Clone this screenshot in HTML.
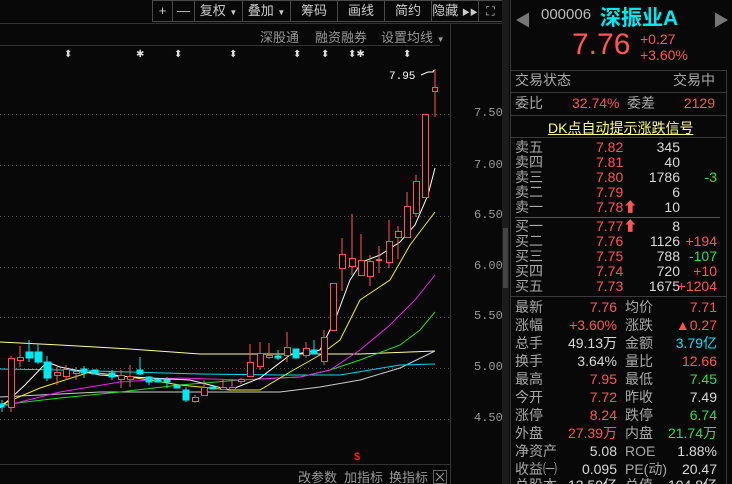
<!DOCTYPE html>
<html style="width:732px;height:484px;overflow:hidden"><head><meta charset="utf-8"><style>
*{margin:0;padding:0;box-sizing:border-box}
body{width:732px;height:484px;background:#080808;overflow:hidden;position:relative;font-family:"Liberation Sans","Noto Sans CJK SC",sans-serif;color:#c8c8c8}
.a{position:absolute;white-space:nowrap}
.tb{position:absolute;top:0;height:22px;border:1px solid #4a4a4a;border-left:none;font-size:13px;color:#ccc;text-align:center;line-height:20px}
.r{color:#ff5555}.g{color:#33dd55}.c{color:#00e8f0}.w{color:#d8d8d8}.l{color:#a8a8a8}
.row{position:absolute;left:515px;width:207px;height:15px;font-size:14px;line-height:15px}
.row span{position:absolute}
.hl{position:absolute;height:1px;background:#3a3a3a}
</style></head><body>
<div class="tb" style="left:152px;width:21px;border-left:1px solid #4a4a4a">+</div>
<div class="tb" style="left:173px;width:22px">—</div>
<div class="tb" style="left:195px;width:48px">复权 <span style="font-size:8px">▼</span></div>
<div class="tb" style="left:243px;width:48px">叠加 <span style="font-size:8px">▼</span></div>
<div class="tb" style="left:291px;width:47px">筹码</div>
<div class="tb" style="left:338px;width:47px">画线</div>
<div class="tb" style="left:385px;width:47px">简约</div>
<div class="tb" style="left:432px;width:47px">隐藏 <span style="font-size:8px">▶▶</span></div>
<div class="tb" style="left:479px;width:24px;font-size:12px">⛶</div>
<div class="a" style="left:0;top:23px;width:503px;height:1px;background:#333"></div>
<div class="a l" style="left:260px;top:27px;font-size:13px;color:#999">深股通</div>
<div class="a l" style="left:315px;top:27px;font-size:13px;color:#999">融资融券</div>
<div class="a l" style="left:381px;top:27px;font-size:13px;color:#999">设置均线 <span style="font-size:8px">▼</span></div>
<div class="a" style="left:0;top:45px;width:440px;height:1px;background:#333"></div>
<div class="a" style="left:450px;top:23px;width:1px;height:461px;background:#333"></div>
<div class="a" style="left:502px;top:0;width:7px;height:484px;background:#1c1c1c"></div>
<div class="a" style="left:503px;top:228px;width:5px;height:60px;background:#444"></div>
<div class="a" style="left:474px;top:106px;font-size:12px;color:#999;font-family:'Liberation Mono',monospace">7.50</div>
<div class="a" style="left:474px;top:158px;font-size:12px;color:#999;font-family:'Liberation Mono',monospace">7.00</div>
<div class="a" style="left:474px;top:208px;font-size:12px;color:#999;font-family:'Liberation Mono',monospace">6.50</div>
<div class="a" style="left:474px;top:259px;font-size:12px;color:#999;font-family:'Liberation Mono',monospace">6.00</div>
<div class="a" style="left:474px;top:309px;font-size:12px;color:#999;font-family:'Liberation Mono',monospace">5.50</div>
<div class="a" style="left:474px;top:360px;font-size:12px;color:#999;font-family:'Liberation Mono',monospace">5.00</div>
<div class="a" style="left:474px;top:411px;font-size:12px;color:#999;font-family:'Liberation Mono',monospace">4.50</div>
<svg class="a" style="left:0;top:0" width="452" height="484">
<g stroke="#555" stroke-dasharray="1,3">
<line x1="0" y1="114.5" x2="452" y2="114.5"/><line x1="0" y1="165.5" x2="452" y2="165.5"/><line x1="0" y1="216.5" x2="452" y2="216.5"/><line x1="0" y1="267.5" x2="452" y2="267.5"/><line x1="0" y1="317.5" x2="452" y2="317.5"/><line x1="0" y1="368.5" x2="452" y2="368.5"/><line x1="0" y1="419.5" x2="452" y2="419.5"/>
</g>
<g fill="#ddd" font-size="10" font-family="Liberation Sans">
<text x="64" y="57">⬍</text><text x="136" y="57">✱</text><text x="174" y="57">⬍</text><text x="229" y="57">⬍</text><text x="293" y="57">⬍</text><text x="321" y="57">⬍</text><text x="348" y="57">⬍✱</text><text x="403" y="57">⬍</text>
</g>
<text x="389" y="79" fill="#fff" font-size="11" font-family="Liberation Mono">7.95</text>
<polyline points="421,75 428,72 433,72 434,70" stroke="#fff" fill="none"/>
<g fill="none" stroke-width="1">
<polyline stroke="#ffff99" points="0,342 60,345 130,349 200,354 280,354 360,354 435,351"/>
<polyline stroke="#ccc" points="0,397 100,392 200,392 280,392 320,387 360,380 400,368 435,351"/>
<polyline stroke="#00d8e8" points="0,369 60,370 130,372 200,374 280,375 340,375 400,365 435,364"/>
<polyline stroke="#22dd22" points="0,405 60,398 120,392 180,385 240,380 300,377 330,370 360,360 400,345 420,330 435,312"/>
<polyline stroke="#ee22ee" points="0,407 60,392 120,382 180,378 240,380 300,377 330,370 360,350 390,325 415,300 435,275"/>
<polyline stroke="#eeee22" points="0,405 40,388 90,372 130,377 180,385 230,390 260,390 290,372 320,355 340,340 360,300 390,280 410,245 435,212"/>
<polyline stroke="#fff" points="0,408 25,385 47,362 60,367 100,375 150,378 190,380 230,390 260,378 290,355 320,350 335,320 350,280 362,262 380,255 400,242 415,225 428,195 435,168"/>
</g>
<g stroke="#ff5555" fill="#080808">
<line x1="11" y1="356" x2="11" y2="412"/><rect x="8.5" y="358.5" width="6" height="49"/>
<line x1="20" y1="346" x2="20" y2="367"/><rect x="17.5" y="357.5" width="6" height="3"/>
<line x1="57" y1="367" x2="57" y2="385"/><rect x="54.5" y="372.5" width="6" height="3"/>
<line x1="66" y1="365" x2="66" y2="380"/><rect x="63.5" y="369.5" width="6" height="7"/>
<line x1="76" y1="367" x2="76" y2="380"/><rect x="73.5" y="371.5" width="6" height="2"/>
<line x1="121" y1="370" x2="121" y2="388"/><rect x="118.5" y="375.5" width="6" height="4"/>
<line x1="130" y1="365" x2="130" y2="387"/><rect x="127.5" y="376.5" width="6" height="3"/>
<line x1="195" y1="395" x2="195" y2="403"/><rect x="192.5" y="397.5" width="6" height="4"/>
<line x1="204" y1="380" x2="204" y2="395"/><rect x="201.5" y="387.5" width="6" height="8"/>
<line x1="223" y1="380" x2="223" y2="390"/><rect x="220.5" y="387.5" width="6" height="2"/>
<line x1="232" y1="379" x2="232" y2="390"/><rect x="229.5" y="387.5" width="6" height="2"/>
<line x1="241" y1="378" x2="241" y2="384"/><rect x="238.5" y="379.5" width="6" height="2"/>
<line x1="250" y1="344" x2="250" y2="377"/><rect x="247.5" y="362.5" width="6" height="14"/>
<line x1="260" y1="342" x2="260" y2="370"/><rect x="257.5" y="353.5" width="6" height="13"/>
<line x1="269" y1="343" x2="269" y2="359"/><rect x="266.5" y="355.5" width="6" height="2"/>
<line x1="287" y1="332" x2="287" y2="362"/><rect x="284.5" y="347.5" width="6" height="8"/>
<line x1="306" y1="342" x2="306" y2="358"/><rect x="303.5" y="348.5" width="6" height="7"/>
<line x1="324" y1="330" x2="324" y2="365"/><rect x="321.5" y="337.5" width="6" height="24"/>
<rect x="330.5" y="283.5" width="6" height="47"/>
<line x1="342" y1="238" x2="342" y2="291"/><rect x="339.5" y="254.5" width="6" height="14"/>
<line x1="352" y1="214" x2="352" y2="275"/><rect x="349.5" y="258.5" width="6" height="8"/>
<line x1="361" y1="234" x2="361" y2="275"/><rect x="358.5" y="260.5" width="6" height="15"/>
<line x1="370" y1="255" x2="370" y2="286"/><rect x="367.5" y="261.5" width="6" height="15"/>
<line x1="379" y1="246" x2="379" y2="273"/><rect x="376.5" y="259.5" width="5" height="1"/>
<line x1="389" y1="220" x2="389" y2="268"/><rect x="386.5" y="241.5" width="6" height="21"/>
<line x1="398" y1="226" x2="398" y2="259"/><rect x="395.5" y="231.5" width="6" height="6"/>
<line x1="407" y1="192" x2="407" y2="237"/><rect x="404.5" y="206.5" width="6" height="31"/>
<line x1="416" y1="175" x2="416" y2="217"/><rect x="413.5" y="181.5" width="6" height="32"/>
<rect x="422.5" y="114.5" width="6" height="83"/>
<line x1="435" y1="69" x2="435" y2="117"/><rect x="432.5" y="87.5" width="5" height="4"/>
</g>
<g fill="#00e8f0" stroke="#00e8f0">
<line x1="2" y1="400" x2="2" y2="412"/><rect x="0" y="404" width="4" height="3"/>
<line x1="29" y1="340" x2="29" y2="362"/><rect x="26" y="352" width="7" height="6"/>
<line x1="38" y1="344" x2="38" y2="364"/><rect x="35" y="352" width="7" height="10"/>
<line x1="47" y1="356" x2="47" y2="381"/><rect x="44" y="362" width="7" height="16"/>
<line x1="84" y1="366" x2="84" y2="378"/><rect x="81" y="369" width="6" height="4"/>
<rect x="92" y="370" width="6" height="4"/>
<line x1="112" y1="370" x2="112" y2="380"/><rect x="109" y="373" width="6" height="4"/>
<line x1="140" y1="357" x2="140" y2="375"/><rect x="137" y="370" width="6" height="4"/>
<line x1="149" y1="376" x2="149" y2="385"/><rect x="146" y="377" width="6" height="5"/>
<rect x="155" y="379" width="6" height="3"/><rect x="164" y="380" width="6" height="2"/>
<line x1="167" y1="377" x2="167" y2="388"/>
<rect x="174" y="385" width="6" height="3"/>
<line x1="186" y1="387" x2="186" y2="402"/><rect x="183" y="390" width="6" height="10"/>
<rect x="210" y="387" width="6" height="2"/>
<line x1="278" y1="350" x2="278" y2="360"/><rect x="275" y="356" width="6" height="2"/>
<line x1="296" y1="349" x2="296" y2="358"/><rect x="293" y="349" width="6" height="9"/>
<line x1="314" y1="340" x2="314" y2="354"/><rect x="311" y="350" width="6" height="4"/>
</g>
<line x1="0" y1="464.5" x2="450" y2="464.5" stroke="#333"/>
<text x="354" y="460" fill="#ee2222" font-size="11" font-weight="bold" font-family="Liberation Sans">$</text>
<rect x="433.5" y="470.5" width="13" height="13" stroke="#666" fill="none"/>
<path d="M436,473 L444,481 M444,473 L436,481" stroke="#999"/>
</svg>
<div class="a" style="left:298px;top:467px;font-size:13px;color:#999">改参数</div>
<div class="a" style="left:344px;top:467px;font-size:13px;color:#999">加指标</div>
<div class="a" style="left:389px;top:467px;font-size:13px;color:#999">换指标</div>
<div class="a" style="left:510px;top:0;width:1px;height:484px;background:#3a3a3a"></div>
<div class="a" style="left:726px;top:70px;width:1px;height:414px;background:#3a3a3a"></div>
<div class="a" style="left:515px;top:7px;font-size:16px;color:#777">◀</div>
<div class="a" style="left:713px;top:7px;font-size:16px;color:#777">▶</div>
<div class="a" style="left:541px;top:6px;font-size:15px;color:#bbb">000006</div>
<div class="a c" style="left:600px;top:2px;font-size:21px;font-weight:bold">深振业A</div>
<div class="a r" style="left:572px;top:28px;font-size:30px">7.76</div>
<div class="a r" style="left:640px;top:31px;font-size:14px">+0.27</div>
<div class="a r" style="left:640px;top:47px;font-size:14px">+3.60%</div>
<div class="hl" style="left:511px;top:70px;width:216px"></div>
<div class="row" style="top:73px"><span class="l">交易状态</span><span style="right:7px" class="l">交易中</span></div>
<div class="hl" style="left:511px;top:92px;width:216px"></div>
<div class="row" style="top:96px"><span class="l">委比</span><span class="r" style="left:57px">32.74%</span><span class="l" style="left:112px">委差</span><span class="r" style="right:7px">2129</span></div>
<div class="hl" style="left:511px;top:115px;width:216px"></div>
<div class="a" style="left:548px;top:118px;font-size:14px;color:#ffff88;text-decoration:underline">DK点自动提示涨跌信号</div>
<div class="hl" style="left:511px;top:137px;width:216px"></div>
<div class="row" style="top:140px"><span class="l">卖五</span><span class="r" style="left:81px">7.82</span><span class="w" style="right:42px">345</span></div>
<div class="row" style="top:155px"><span class="l">卖四</span><span class="r" style="left:81px">7.81</span><span class="w" style="right:42px">40</span></div>
<div class="row" style="top:170px"><span class="l">卖三</span><span class="r" style="left:81px">7.80</span><span class="w" style="right:42px">1786</span><span class="g" style="right:5px">-3</span></div>
<div class="row" style="top:185px"><span class="l">卖二</span><span class="r" style="left:81px">7.79</span><span class="w" style="right:42px">6</span></div>
<div class="row" style="top:200px"><span class="l">卖一</span><span class="r" style="left:81px">7.78⬆</span><span class="w" style="right:42px">10</span></div>
<div class="hl" style="left:515px;top:217px;width:205px;background:#555"></div>
<div class="row" style="top:219px"><span class="l">买一</span><span class="r" style="left:81px">7.77⬆</span><span class="w" style="right:42px">8</span></div>
<div class="row" style="top:234px"><span class="l">买二</span><span class="r" style="left:81px">7.76</span><span class="w" style="right:42px">1126</span><span class="r" style="right:5px">+194</span></div>
<div class="row" style="top:249px"><span class="l">买三</span><span class="r" style="left:81px">7.75</span><span class="w" style="right:42px">788</span><span class="g" style="right:5px">-107</span></div>
<div class="row" style="top:264px"><span class="l">买四</span><span class="r" style="left:81px">7.74</span><span class="w" style="right:42px">720</span><span class="r" style="right:5px">+10</span></div>
<div class="row" style="top:279px"><span class="l">买五</span><span class="r" style="left:81px">7.73</span><span class="w" style="right:42px">1675</span><span class="r" style="right:5px">+1204</span></div>
<div class="hl" style="left:511px;top:296px;width:216px"></div>
<div class="row" style="top:300px"><span class="l">最新</span><span class="r" style="right:105px">7.76</span><span class="l" style="left:110px">均价</span><span class="r" style="right:5px">7.71</span></div>
<div class="row" style="top:318px"><span class="l">涨幅</span><span class="r" style="right:105px">+3.60%</span><span class="l" style="left:110px">涨跌</span><span class="r" style="right:5px">▲0.27</span></div>
<div class="row" style="top:336px"><span class="l">总手</span><span class="w" style="right:105px">49.13万</span><span class="l" style="left:110px">金额</span><span class="c" style="right:5px">3.79亿</span></div>
<div class="row" style="top:354px"><span class="l">换手</span><span class="w" style="right:105px">3.64%</span><span class="l" style="left:110px">量比</span><span class="r" style="right:5px">12.66</span></div>
<div class="row" style="top:372px"><span class="l">最高</span><span class="r" style="right:105px">7.95</span><span class="l" style="left:110px">最低</span><span class="g" style="right:5px">7.45</span></div>
<div class="row" style="top:390px"><span class="l">今开</span><span class="r" style="right:105px">7.72</span><span class="l" style="left:110px">昨收</span><span class="w" style="right:5px">7.49</span></div>
<div class="row" style="top:408px"><span class="l">涨停</span><span class="r" style="right:105px">8.24</span><span class="l" style="left:110px">跌停</span><span class="g" style="right:5px">6.74</span></div>
<div class="row" style="top:426px"><span class="l">外盘</span><span class="r" style="right:105px">27.39万</span><span class="l" style="left:110px">内盘</span><span class="g" style="right:5px">21.74万</span></div>
<div class="row" style="top:444px"><span class="l">净资产</span><span class="w" style="right:105px">5.08</span><span class="l" style="left:110px">ROE</span><span class="w" style="right:5px">1.88%</span></div>
<div class="row" style="top:462px"><span class="l">收益㈠</span><span class="w" style="right:105px">0.095</span><span class="l" style="left:110px">PE(动)</span><span class="w" style="right:5px">20.47</span></div>
<div class="row" style="top:478px;height:6px;overflow:hidden"><span class="l">总股本</span><span class="w" style="right:105px">13.50亿</span><span class="l" style="left:110px">总值</span><span class="w" style="right:5px">104.8亿</span></div>
</body></html>
